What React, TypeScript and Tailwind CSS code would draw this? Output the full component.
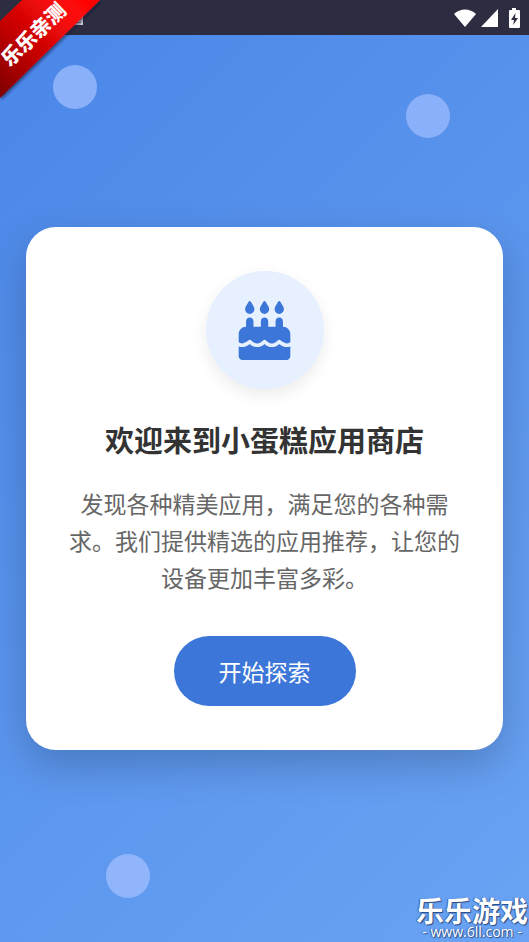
import React from 'react';
import { FaCakeCandles } from 'react-icons/fa6';

interface WelcomeCardProps {
    title: string;
    description: string;
    action: string;
}

const StatusBar: React.FC = () => (
    <header className="flex h-[35px] items-center justify-between bg-[#2d2d41] pr-2 pl-[70px]">
        <svg width="14" height="14" viewBox="0 0 14 14" aria-hidden="true">
            <path d="M1 3h12v11H1z" fill="#c9c9cf" />
            <path d="M3 5h8v4H3zM3 11h8v1H3z" fill="#77777f" />
        </svg>
        <div className="flex items-center gap-1">
            <svg width="24" height="20" viewBox="0 0 24 20" fill="#fff" aria-hidden="true">
                <path d="M12 19 1 6C4 3 8 1.5 12 1.5S20 3 23 6z" />
            </svg>
            <svg width="17" height="18" viewBox="0 0 17 18" fill="#fff" aria-hidden="true">
                <path d="M0 18 17 0v18z" />
            </svg>
            <svg className="ml-1.5" width="13" height="20" viewBox="0 0 13 20" aria-hidden="true">
                <path d="M4 0h4v2h3q1 0 1 1v16q0 1-1 1H2q-1 0-1-1V3q0-1 1-1h2z" fill="#fff" />
                <path d="M7.5 5 3 12h3l-.8 5L10 10H7z" fill="#2d2d41" />
            </svg>
        </div>
    </header>
);

const CornerRibbon: React.FC = () => (
    <div className="absolute top-0 left-0 z-10">
        <svg width="106" height="106" viewBox="0 0 106 106" aria-hidden="true">
            <defs>
                <linearGradient id="ribbon" x1="0" y1="1" x2="1" y2="0">
                    <stop offset="0" stopColor="#7d0000" />
                    <stop offset="0.4" stopColor="#c40505" />
                    <stop offset="0.75" stopColor="#fb0808" />
                    <stop offset="1" stopColor="#ff0505" />
                </linearGradient>
                <filter id="ribbonShadow">
                    <feDropShadow dx="1" dy="2" stdDeviation="1.5" floodColor="#101830" floodOpacity="0.6" />
                </filter>
            </defs>
            <path d="M22 0h78L0 98V21z" fill="url(#ribbon)" filter="url(#ribbonShadow)" />
            <text
                x="33"
                y="42"
                textAnchor="middle"
                transform="rotate(-44 33 34)"
                className="fill-white font-['Noto_Sans_CJK_SC',sans-serif] text-[20px] font-black"
            >
                乐乐亲测
            </text>
        </svg>
    </div>
);

const WelcomeCard: React.FC<WelcomeCardProps> = ({ title, description, action }) => (
    <section className="flex w-full flex-col items-center rounded-[30px] bg-white px-9 py-11 text-center shadow-[0_15px_40px_rgba(0,0,0,0.2)]">
        <div className="flex size-[118px] items-center justify-center rounded-full bg-[#e6f0ff] shadow-[0_6px_16px_rgba(0,0,0,0.08)]">
            <FaCakeCandles className="text-[59px] text-[#3b76d8]" />
        </div>
        <h1 className="mt-7 text-[29px] leading-[44px] font-bold text-[#333333]">{title}</h1>
        <p className="mt-6 text-[23px] leading-[37px] text-[#666666]">{description}</p>
        <button type="button" className="mt-10 h-[70px] rounded-full bg-[#3b76d8] px-[45px] text-[23px] text-white">
            {action}
        </button>
    </section>
);

const Watermark: React.FC = () => (
    <div className="absolute right-0 bottom-0 flex flex-col items-center pr-px pb-px text-white [text-shadow:1px_1px_1px_#2a4a80,-1px_0_1px_#3a62a8]">
        <span className="text-[28px] leading-[26px] font-bold">乐乐游戏</span>
        <span className="font-['Open_Sans',sans-serif] text-[14px] leading-[18px]">- www.6ll.com -</span>
    </div>
);

const App: React.FC = () => {
    return (
        <div className="relative flex min-h-screen flex-col overflow-hidden bg-linear-135 from-[#4a86e8] to-[#6aa3f3] font-['Noto_Sans_CJK_SC',sans-serif]">
            <StatusBar />
            <CornerRibbon />

            {/* floating bubbles */}
            <div className="absolute top-[65px] left-[10%] size-11 rounded-full bg-[#8ab0f9]" />
            <div className="absolute top-[94px] right-[15%] size-11 rounded-full bg-[#8ab0f9]" />
            <div className="absolute bottom-11 left-[20%] size-11 rounded-full bg-[#90b5fb]" />

            <main className="relative flex flex-1 items-center px-[26px]">
                <WelcomeCard
                    title="欢迎来到小蛋糕应用商店"
                    description="发现各种精美应用，满足您的各种需求。我们提供精选的应用推荐，让您的设备更加丰富多彩。"
                    action="开始探索"
                />
            </main>

            <Watermark />
        </div>
    );
};

export default App;
